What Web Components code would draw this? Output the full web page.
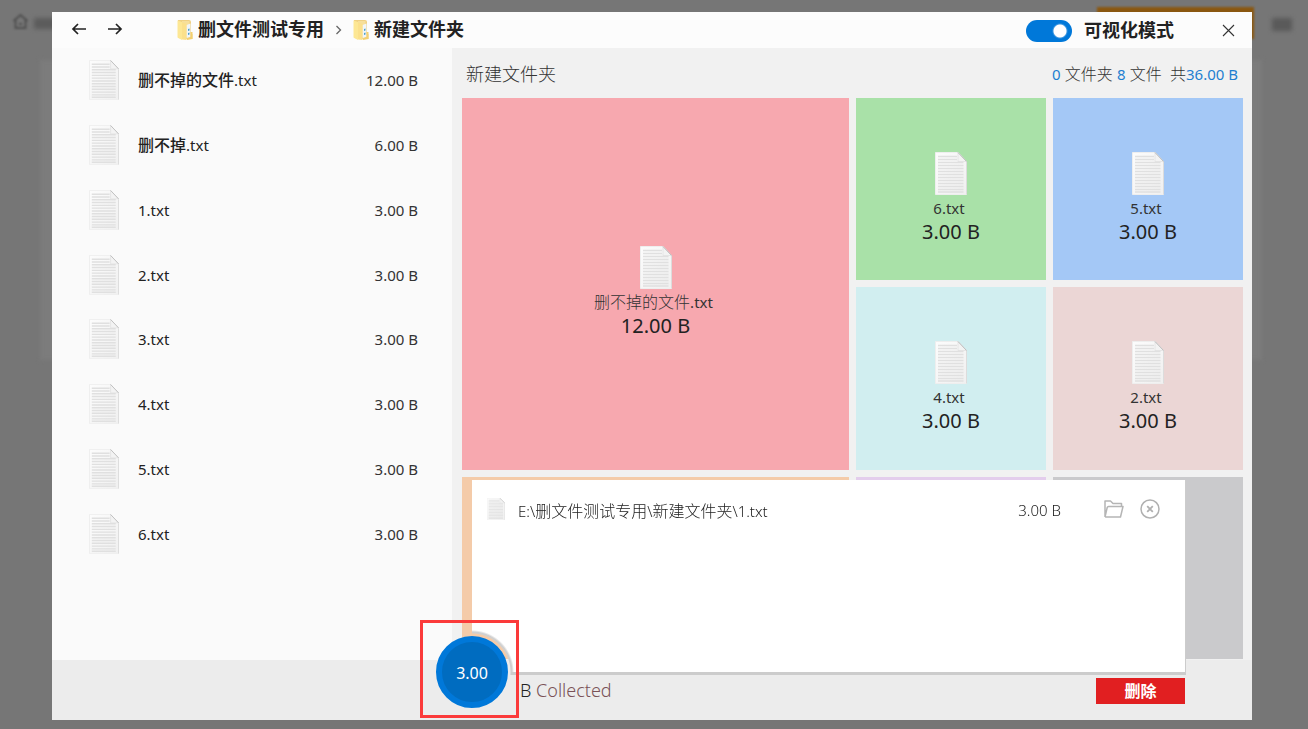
<!DOCTYPE html>
<html lang="zh-CN">
<head>
<meta charset="utf-8">
<title>可视化模式</title>
<style>
html,body{height:100%}
body{margin:0;background:#767676;font-family:"Noto Sans","Noto Sans CJK SC",sans-serif;color:#222}
</style>
</head>
<body>
<space-app></space-app>
<script>
const define=(name,html)=>customElements.define(name,class extends HTMLElement{
  connectedCallback(){
    if(this.shadowRoot)return;
    const root=this.attachShadow({mode:'open'});
    const t=document.createElement('template');
    t.innerHTML=typeof html==='function'?html(this):html;
    root.append(t.content.cloneNode(true));
  }
});

define('text-file-icon',`
<style>:host{display:block;width:32px;height:43px}svg{display:block;width:100%;height:100%}</style>
<svg viewBox="0 0 32 43" preserveAspectRatio="none" aria-hidden="true">
<defs><linearGradient id="p" x1="0" y1="0" x2="1" y2="1"><stop offset="0" stop-color="#fcfcfc"/><stop offset="1" stop-color="#f0f0f0"/></linearGradient></defs>
<path d="M.5.5H23L31.500 9.500V42.500H.5Z" fill="url(#p)" stroke="#eeeeee"/>
<path d="M31.500 10V42.500" stroke="#dcdcdc"/>
<path d="M3 4.500H22M3 7.500H22M3 10.500H28.500M3 13.500H28.500M3 16.500H28.500M3 19.500H28.500M3 22.500H28.500M3 25.500H28.500M3 28.500H28.500M3 31.500H28.500M3 34.500H28.500M3 37.500H28.500M3 40H28.500" stroke="#e0e0e0" stroke-width="1.500"/>
<path d="M23 .5V9.500H31.500Z" fill="#f3f3f3" stroke="#dedede" stroke-width=".7"/>
<path d="M23 .5L31.500 9.500" stroke="#b4b4b4" stroke-width=".8"/>
</svg>`);

define('folder-icon',`
<style>:host{display:block;width:16px;height:22px}svg{display:block}</style>
<svg width="16" height="22" viewBox="0 0 16 22" aria-hidden="true">
<path d="M1 1H12Q14 1 14 3V15H15.500V20H10L1 19Z" fill="#efd082"/>
<path d="M5 2H12.500V18H5Z" fill="#f6df9b"/>
<path d="M9.500 6L13.500 4.500V18L9.500 19Z" fill="#f1f5f8"/><path d="M11 10l1.500-.5v2L11 12zM11 14l1.500-.5v2L11 16z" fill="#4f9fc8"/>
<path d="M.5 1.500L5 3V21L.5 18.500Z" fill="#fde794"/><path d="M5 3.500L9.500 5V21L5 20.500Z" fill="#fbe08b"/>
<path d="M13.500 13H15.500V20L10 21V19.500L13.500 18Z" fill="#f3d070"/>
</svg>`);

define('page-backdrop',`
<style>
:host{display:block;position:absolute;inset:0;overflow:hidden}
.card{position:absolute;left:40px;right:46px;top:60px;height:300px;background:#7c7c7c;filter:blur(2px)}
.home{position:absolute;left:12px;top:13px;filter:blur(1px)}
.label{position:absolute;left:34px;top:18px;width:24px;height:11px;background:#5c5c5c;filter:blur(2px)}
.cta{position:absolute;right:54px;top:7px;width:157px;height:32px;background:#8a5710;filter:blur(1px)}
.menu{position:absolute;right:16px;top:18px;width:20px;height:13px;background:#5a5a5a;filter:blur(2px)}
</style>
<div class="card"></div>
<svg class="home" width="17" height="17" viewBox="0 0 17 17" fill="none" stroke="#505050" stroke-width="2"><path d="M1.500 8L8.500 2L15.500 8M3.500 7V15H13.500V7M7 11H10"/></svg>
<div class="label"></div><div class="cta"></div><div class="menu"></div>`);

define('path-bar',`
<style>
:host{display:flex;align-items:center;height:36px;box-sizing:border-box;padding-bottom:2px;background:#fcfcfc;flex:none}
button{border:0;background:none;padding:0;display:block}
svg{display:block}
.nav{display:flex;gap:20px;padding-left:19px}
nav{display:flex;align-items:center;padding-left:54px;font-size:18px;font-weight:700;line-height:26px}
nav a{display:flex;align-items:center;gap:5px;color:#222;text-decoration:none}
folder-icon{margin-top:2px}
nav svg{margin:2px 11px 0}
label{margin-left:auto;display:flex;align-items:center;gap:12px;font-size:18px;font-weight:700;line-height:26px;padding-top:2px}
input{appearance:none;width:46px;height:22px;border-radius:11px;margin:2px 0 0;background:radial-gradient(circle at 34px 11px,#fff 6px,#3b96e0 7px,#0078d9 8px)}
.close{padding:2px 17px 0 48px}
</style>
<div class="nav">
<button aria-label="后退"><svg width="16" height="16" fill="none" stroke="#222" stroke-width="1.700"><path d="M15 8H2M7 3L2 8L7 13"/></svg></button>
<button aria-label="前进"><svg width="16" height="16" fill="none" stroke="#222" stroke-width="1.700"><path d="M1 8H14M9 3L14 8L9 13"/></svg></button>
</div>
<nav><a href="#"><folder-icon></folder-icon>删文件测试专用</a>
<svg width="7" height="10" fill="none" stroke="#666" stroke-width="1.300"><path d="M1.500 1L5.500 5L1.500 9"/></svg>
<a href="#"><folder-icon></folder-icon>新建文件夹</a></nav>
<label><input type="checkbox" role="switch" checked>可视化模式</label>
<button class="close" aria-label="关闭"><svg width="13" height="13" stroke="#333" stroke-width="1.100"><path d="M1 1L12 12M12 1L1 12"/></svg></button>`);

define('file-row',el=>`
<style>
:host{display:flex;align-items:center;flex:1 1 0;min-height:40px;padding:0 34px 0 37px;font-size:15px;line-height:22px}
text-file-icon{width:30px;height:40px}
.name{margin-left:19px;flex:1}
::slotted(span){font-size:16px;font-weight:500}
.size{color:#333}
</style>
<text-file-icon></text-file-icon><span class="name"><slot></slot></span><span class="size">${el.getAttribute('size')}</span>`);

define('file-list',`
<style>:host{display:flex;flex-direction:column;flex:0 0 400px;box-sizing:border-box;background:#fafafa;padding-bottom:94px}</style>
<slot></slot>`);

define('map-tile',el=>`
<style>
:host{display:flex;flex-direction:column;align-items:center;justify-content:center;box-sizing:border-box;padding-top:18px;background:var(--tile);color:#222;min-height:0;min-width:0}
.name{font-size:15px;line-height:22px;margin-top:2px;margin-right:4px;color:#333}
::slotted(span){font-size:16px;font-weight:300}
.size{font-size:20px;line-height:26px}
</style>
${el.getAttribute('size')?`<text-file-icon></text-file-icon><span class="name"><slot></slot></span><span class="size">${el.getAttribute('size')}</span>`:''}`);

define('space-map',`
<style>
:host{display:flex;flex-direction:column;flex:1;min-width:0;background:#f1f1f1;padding:0 9px 1px 10px}
header{display:flex;align-items:center;justify-content:space-between;height:50px;padding:0 5px 0 4px;box-sizing:border-box;font-size:16px;color:#333;flex:none}
h2{margin:0;font-size:18px;font-weight:300}
p{margin:0;white-space:pre;font-weight:300}
b{font-size:15px;font-weight:400;color:#1f7fd0}
.grid{flex:1;display:grid;grid-template-columns:repeat(4,1fr);grid-template-rows:repeat(3,1fr);gap:7px;min-height:0}
.big{grid-column:span 2;grid-row:span 2}.wide{grid-column:span 2}
</style>
<header><h2>新建文件夹</h2><p><b>0</b> 文件夹 <b>8</b> 文件  共<b>36.00 B</b></p></header>
<div class="grid">
<map-tile class="big" style="--tile:#f7a8af" size="12.00 B"><span>删不掉的文件</span>.txt</map-tile>
<map-tile style="--tile:#a9e1a8" size="3.00 B">6.txt</map-tile>
<map-tile style="--tile:#a4c8f6" size="3.00 B">5.txt</map-tile>
<map-tile style="--tile:#d1eef0" size="3.00 B">4.txt</map-tile>
<map-tile style="--tile:#ebd6d5" size="3.00 B">2.txt</map-tile>
<map-tile class="wide" style="--tile:#f4cba9"></map-tile>
<map-tile style="--tile:#e3cdec"></map-tile>
<map-tile style="--tile:#cacacc"></map-tile>
</div>`);

define('collected-panel',`
<style>
:host{display:block;box-sizing:border-box;height:195px;border:solid #ccc;border-width:0 1px 3px 0;
background:linear-gradient(#fff,#fff) 43px 0/100% 100% no-repeat,radial-gradient(circle at 0 192px,#d0d0d0 40px,#fff 42px);
mask:radial-gradient(circle at 0 192px,transparent 38px,#000 39px)}
.item{display:flex;align-items:center;height:60px;box-sizing:border-box;padding:0 25px 2px 15px;font-size:15px;font-weight:300;color:#222}
text-file-icon{width:18px;height:22px}
.path{margin-left:13px;flex:1;padding-top:2px}
.path span{font-size:16px}
.size{padding-top:2px}
button{border:0;background:none;padding:0}svg{display:block}
.open{margin-left:43px}.remove{margin-left:16px}
</style>
<div class="item"><text-file-icon></text-file-icon><span class="path">E:\\<span>删文件测试专用</span>\\<span>新建文件夹</span>\\1.txt</span><span class="size">3.00 B</span>
<button class="open" aria-label="打开文件夹"><svg width="20" height="18" fill="none" stroke="#b5b5b5" stroke-width="1.500" stroke-linejoin="round"><path d="M1 17V1H6.500L9 3.500H17.500V6.500M1 17H16.500L19 6.500H4.500Q3.500 6.500 3.200 7.500L1 17"/></svg></button>
<button class="remove" aria-label="移除"><svg width="20" height="20" fill="none" stroke="#b0b0b0" stroke-width="1.500"><circle cx="10" cy="10" r="9"/><path d="M7.200 7.200L12.800 12.800M12.800 7.200L7.200 12.800" stroke-width="1.800"/></svg></button></div>`);

define('collect-bar',`
<style>
:host{display:flex;align-items:center;justify-content:space-between;box-sizing:border-box;height:60px;flex:none;background:#ececec;padding:2px 67px 0 468px;font-size:18px;font-weight:300;line-height:24px}
p{margin:0;padding-bottom:2px}
.unit{color:#222}.word{color:#7a5257}
button{border:0;background:#e11f21;color:#fff;font:700 16px/26px "Noto Sans","Noto Sans CJK SC",sans-serif;width:89px;height:26px;padding:0}
</style>
<p><span class="unit">B</span> <span class="word">Collected</span></p><button>删除</button>`);

define('collect-badge',`
<style>
:host{display:grid;place-items:center;box-sizing:border-box;width:99px;height:98px;border:3px solid #fb3a3a;padding-left:5px;padding-top:5px}
span{display:grid;place-items:center;box-sizing:border-box;width:72px;height:72px;border:6px solid #0078d9;border-radius:50%;background:#006cc0;color:#fff;font-size:16px;padding-top:2px}
</style><span><slot></slot></span>`);

define('space-app',`
<style>
:host{display:flex;position:relative;box-sizing:border-box;min-height:100%;padding:12px 56px 9px 52px}
.window{display:flex;flex-direction:column;flex:1;min-width:0;position:relative}
.body{display:flex;flex:1;min-height:0}
collected-panel{position:absolute;left:420px;right:66px;bottom:45px}
collect-badge{position:absolute;left:368px;bottom:2px}
</style>
<page-backdrop></page-backdrop>
<div class="window">
<path-bar></path-bar>
<div class="body">
<file-list>
<file-row size="12.00 B"><span>删不掉的文件</span>.txt</file-row>
<file-row size="6.00 B"><span>删不掉</span>.txt</file-row>
<file-row size="3.00 B">1.txt</file-row>
<file-row size="3.00 B">2.txt</file-row>
<file-row size="3.00 B">3.txt</file-row>
<file-row size="3.00 B">4.txt</file-row>
<file-row size="3.00 B">5.txt</file-row>
<file-row size="3.00 B">6.txt</file-row>
</file-list>
<space-map></space-map>
</div>
<collect-bar></collect-bar>
<collected-panel></collected-panel>
<collect-badge>3.00</collect-badge>
</div>`);
</script>
</body>
</html>
